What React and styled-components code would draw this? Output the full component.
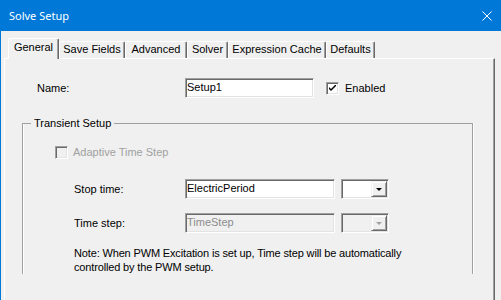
import React from 'react';
import styled, { createGlobalStyle } from 'styled-components';

const GlobalStyle = createGlobalStyle`
  html, body {
    margin: 0;
    padding: 0;
  }
  body {
    width: 501px;
    height: 300px;
    overflow: hidden;
    background: #f0f0f0;
  }
`;

const Window = styled.div`
  width: 501px;
  height: 300px;
  display: flex;
  flex-direction: column;
  overflow: hidden;
  background: #f0f0f0;
  color: #000;
  font-family: 'Liberation Sans', Arial, sans-serif;
  font-size: 11px;
  line-height: 13px;
`;

const TitleBar = styled.div`
  flex: 0 0 31px;
  display: flex;
  align-items: center;
  justify-content: space-between;
  padding: 0 9px;
  background: #0078d7;
  color: #fff;
  font-family: 'Noto Sans', sans-serif;
  font-size: 11px;
`;

const Body = styled.div`
  flex: 1;
  min-height: 0;
  display: flex;
  flex-direction: column;
  border-left: 1px solid #0078d7;
  padding: 7px 6px 0 3px;
`;

const TabStrip = styled.div`
  display: flex;
  align-items: flex-end;
  height: 21px;
  margin-left: 4px;
  position: relative;
  z-index: 1;
`;

const Tab = styled.div`
  box-sizing: border-box;
  flex: none;
  width: ${({ $w }) => $w}px;
  height: ${({ $active }) => ($active ? 21 : 17)}px;
  margin-bottom: ${({ $active }) => ($active ? 0 : 1)}px;
  padding-top: ${({ $active }) => ($active ? 2 : 1)}px;
  text-align: center;
  white-space: nowrap;
  background: #f0f0f0;
  border-top: 1px solid #fff;
  border-left: 1px solid #fff;
  border-right: 1px solid #696969;
  border-radius: 2px 2px 0 0;
  box-shadow: inset -1px 0 0 #a0a0a0;
`;

const Panel = styled.div`
  flex: 1;
  margin-top: -1px;
  padding-top: 19px;
  border-top: 1px solid #fff;
  border-left: 1px solid #fff;
  border-right: 1px solid #696969;
  box-shadow: inset -1px 0 0 #a0a0a0;
`;

const Row = styled.div`
  display: flex;
  align-items: center;
  height: ${({ $h }) => $h || 20}px;
  margin-left: ${({ $left }) => $left}px;
  margin-top: ${({ $top }) => $top || 0}px;
  white-space: nowrap;
`;

const Label = styled.span`
  flex: none;
  width: ${({ $w }) => $w}px;
  color: ${({ $disabled }) => ($disabled ? '#a0a0a0' : '#000')};
`;

const TextBox = styled.div`
  box-sizing: border-box;
  flex: none;
  width: ${({ $w }) => $w}px;
  height: 20px;
  padding: 2px 0 0 1px;
  background: ${({ $disabled }) => ($disabled ? '#f0f0f0' : '#fff')};
  color: ${({ $disabled }) => ($disabled ? '#8c8c8c' : '#000')};
  border: 1px solid;
  border-color: #a0a0a0 #fff #fff #a0a0a0;
  box-shadow: inset 1px 1px 0 #696969, inset -1px -1px 0 #e3e3e3;
`;

const Combo = styled(TextBox)`
  display: flex;
  justify-content: flex-end;
  width: 48px;
  margin-left: 6px;
  padding: 1px;
`;

const ComboButton = styled.div`
  box-sizing: border-box;
  width: 16px;
  height: 16px;
  display: flex;
  align-items: center;
  justify-content: center;
  background: #f0f0f0;
  border: 1px solid;
  border-color: #f0f0f0 #696969 #696969 #f0f0f0;
  box-shadow: inset 1px 1px 0 #fff, inset -1px -1px 0 #a0a0a0;
`;

const Arrow = styled.div`
  width: 0;
  height: 0;
  border-left: 3px solid transparent;
  border-right: 3px solid transparent;
  border-top: 3px solid ${({ $disabled }) => ($disabled ? '#a0a0a0' : '#000')};
`;

const CheckBox = styled.div`
  box-sizing: border-box;
  flex: none;
  width: 13px;
  height: 13px;
  margin: ${({ $m }) => $m};
  display: flex;
  align-items: center;
  justify-content: center;
  background: ${({ $disabled }) => ($disabled ? '#f0f0f0' : '#fff')};
  border: 1px solid;
  border-color: #a0a0a0 #fff #fff #a0a0a0;
  box-shadow: inset 1px 1px 0 #696969, inset -1px -1px 0 #e3e3e3;
`;

const GroupBox = styled.fieldset`
  box-sizing: border-box;
  flex: 1;
  width: 451px;
  margin: 19px 0 0 17px;
  padding: 0;
  min-inline-size: 0;
  border: 1px solid #a0a0a0;
  border-bottom: none;
  box-shadow: inset 1px 0 0 #fff, 1px 0 0 #fff;
`;

const Legend = styled.legend`
  margin-left: 8px;
  padding: 0 3px;
  line-height: 13px;
`;

const Note = styled.div`
  margin: 13px 0 0 51px;
  line-height: 14px;
  letter-spacing: -0.15px;
  white-space: nowrap;
`;

const CloseIcon = () => (
  <svg width="10" height="10" viewBox="0 0 10 10">
    <path d="M0.5 0.5 L9.5 9.5 M9.5 0.5 L0.5 9.5" stroke="#fff" strokeWidth="1" fill="none" />
  </svg>
);

const Check = () => (
  <svg width="7" height="7" viewBox="0 0 7 7">
    <path d="M0 2 L0 4 L2 6 L7 1 L7 -1 L2 4 Z" fill="#000" />
  </svg>
);

const tabs = [
  { label: 'General', w: 51 },
  { label: 'Save Fields', w: 66 },
  { label: 'Advanced', w: 62 },
  { label: 'Solver', w: 41 },
  { label: 'Expression Cache', w: 98 },
  { label: 'Defaults', w: 49 },
];

const DropDown = ({ disabled }) => (
  <Combo $disabled={disabled}>
    <ComboButton>
      <Arrow $disabled={disabled} />
    </ComboButton>
  </Combo>
);

const App = () => (
  <Window>
    <GlobalStyle />
    <TitleBar>
      <span>Solve Setup</span>
      <CloseIcon />
    </TitleBar>
    <Body>
      <TabStrip>
        {tabs.map((t, i) => (
          <Tab key={t.label} $w={t.w} $active={i === 0}>
            {t.label}
          </Tab>
        ))}
      </TabStrip>
      <Panel>
        <Row $left={32}>
          <Label $w={148}>Name:</Label>
          <TextBox $w={129}>Setup1</TextBox>
          <CheckBox $m="0 6px 0 12px">
            <Check />
          </CheckBox>
          <span>Enabled</span>
        </Row>
        <GroupBox>
          <Legend>Transient Setup</Legend>
          <Row $left={32} $top={16} $h={13}>
            <CheckBox $disabled $m="0 5px 0 0" />
            <Label $disabled>Adaptive Time Step</Label>
          </Row>
          <Row $left={51} $top={20}>
            <Label $w={111}>Stop time:</Label>
            <TextBox $w={150}>ElectricPeriod</TextBox>
            <DropDown />
          </Row>
          <Row $left={51} $top={14}>
            <Label $w={111}>Time step:</Label>
            <TextBox $w={150} $disabled>TimeStep</TextBox>
            <DropDown disabled />
          </Row>
          <Note>
            Note: When PWM Excitation is set up, Time step will be automatically
            <br />
            controlled by the PWM setup.
          </Note>
        </GroupBox>
      </Panel>
    </Body>
  </Window>
);

export default App;
